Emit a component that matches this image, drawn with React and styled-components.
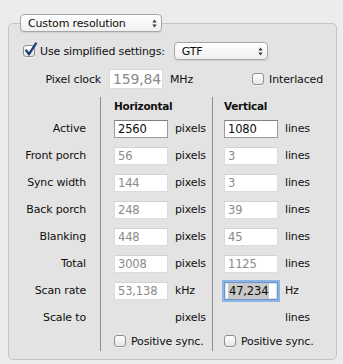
import React from 'react'
import styled, { createGlobalStyle } from 'styled-components'

const Global = createGlobalStyle`
  html, body {
    margin: 0;
    padding: 0;
    background: #ececec;
  }
  body {
    font-family: "DejaVu Sans", Verdana, sans-serif;
    font-size: 11px;
    letter-spacing: -0.15px;
    color: #0f0f0f;
  }
`

const Window = styled.div`
  position: relative;
  width: 343px;
  height: 364px;
  box-sizing: border-box;
  padding-top: 14px;
  overflow: hidden;
  background: #ececec;
`

const Box = styled.fieldset`
  margin: 0 6px 0 8px;
  padding: 0 0 8px;
  min-width: 0;
  border: 1px solid #c4c4c4;
  border-radius: 5px;
  background: #e3e3e3;
`

const Legend = styled.legend`
  margin-left: 11px;
  padding: 0;
`

const Popup = styled.div`
  display: flex;
  align-items: center;
  justify-content: space-between;
  width: ${p => p.$w}px;
  height: 18px;
  box-sizing: border-box;
  padding: 0 4px 0 7px;
  border: 1px solid #a6a6a6;
  border-radius: 4px;
  background: linear-gradient(#ffffff, #f0f0f0);
  box-shadow: 0 1px 1px rgba(0, 0, 0, 0.08);
  font-size: 11px;
  color: #0c0c0c;
`

const Arrows = () => (
  <svg width="5" height="9" viewBox="0 0 5 9">
    <path d="M0.3 3.6 L2.5 0.6 L4.7 3.6 Z M0.3 5.4 L2.5 8.4 L4.7 5.4 Z" fill="#3a3a3a" />
  </svg>
)

const Row = styled.div`
  display: flex;
  align-items: center;
  height: ${p => p.$h}px;
  margin-top: ${p => p.$mt || 0}px;
  padding-left: ${p => p.$pl || 0}px;
`

const CheckBox = styled.span`
  position: relative;
  flex: none;
  width: 12px;
  height: 12px;
  box-sizing: border-box;
  margin-right: ${p => p.$gap || 5}px;
  border: 1px solid #8f8f8f;
  border-radius: 3px;
  background: linear-gradient(#ffffff, #e6e6e6);
  box-shadow: 0 1px 0 rgba(255, 255, 255, 0.6);
`

const Tick = styled.svg`
  position: absolute;
  left: 0;
  top: -4px;
`

const Check = ({ checked, gap, children }) => (
  <>
    <CheckBox $gap={gap}>
      {checked && (
        <Tick width="14" height="15" viewBox="0 0 14 15">
          <path d="M2.2 8.4 L5 12.2 L12 1.4" fill="none" stroke="#1d3c78" strokeWidth="2.3" strokeLinecap="round" strokeLinejoin="round" />
        </Tick>
      )}
    </CheckBox>
    <span>{children}</span>
  </>
)

const ClockLabel = styled.span`
  width: 92px;
  text-align: right;
  margin-right: 8px;
`

const Field = styled.div`
  display: flex;
  align-items: center;
  flex: none;
  width: ${p => p.$w || 54}px;
  height: ${p => p.$h || 18}px;
  box-sizing: border-box;
  padding: 0 3px;
  background: #fff;
  border: 1px solid ${p => (p.$on ? '#9a9a9a' : '#dcdcdc')};
  border-top-color: ${p => (p.$on ? '#7f7f7f' : '#d2d2d2')};
  color: ${p => (p.$on ? '#0c0c0c' : '#8a8a8a')};
  font-size: ${p => p.$fs || 11.5}px;
  ${p => p.$focus && `
    border-color: #6a95cf;
    box-shadow: 0 0 0 2px #8db5e4, inset 0 0 0 1px rgba(120,160,215,0.3);
  `}
`

const Blank = styled.div`
  flex: none;
  width: 54px;
`

const Selected = styled.span`
  background: #c8c8c8;
  padding: 1px 1px;
`

const Unit = styled.span`
  margin-left: 7px;
`

const Interlaced = styled.div`
  display: flex;
  align-items: center;
  margin-left: 59px;
`

const Table = styled.div`
  display: grid;
  grid-template-columns: 91px 112px 1fr;
  margin-top: 8px;
`

const Column = styled.div`
  display: flex;
  flex-direction: column;
  padding-left: ${p => p.$pl || 0}px;
  ${p => p.$divider && 'border-left: 1px solid #8c8c8c;'}
`

const Cell = styled.div`
  display: flex;
  align-items: center;
  justify-content: ${p => (p.$right ? 'flex-end' : 'flex-start')};
  height: ${p => p.$h || 27}px;
  padding-right: ${p => (p.$right ? 14 : 0)}px;
`

const Head = styled.div`
  height: 18px;
  display: flex;
  align-items: center;
  font-weight: bold;
  font-size: 10.5px;
  letter-spacing: -0.3px;
  color: #111;
`

const labels = ['Active', 'Front porch', 'Sync width', 'Back porch', 'Blanking', 'Total', 'Scan rate', 'Scale to']

const horizontal = [
  { v: '2560', on: true, u: 'pixels' },
  { v: '56', u: 'pixels' },
  { v: '144', u: 'pixels' },
  { v: '248', u: 'pixels' },
  { v: '448', u: 'pixels' },
  { v: '3008', u: 'pixels' },
  { v: '53,138', u: 'kHz' },
  { blank: true, u: 'pixels' },
]

const vertical = [
  { v: '1080', on: true, u: 'lines' },
  { v: '3', u: 'lines' },
  { v: '3', u: 'lines' },
  { v: '39', u: 'lines' },
  { v: '45', u: 'lines' },
  { v: '1125', u: 'lines' },
  { v: '47,234', on: true, focus: true, u: 'Hz' },
  { blank: true, u: 'lines' },
]

const ValueColumn = ({ title, rows, pl }) => (
  <Column $divider $pl={pl}>
    <Head>{title}</Head>
    {rows.map((r, i) => (
      <Cell key={i}>
        {r.blank ? (
          <Blank />
        ) : (
          <Field $on={r.on} $focus={r.focus}>
            {r.focus ? <Selected>{r.v}</Selected> : r.v}
          </Field>
        )}
        <Unit>{r.u}</Unit>
      </Cell>
    ))}
    <Cell $h={20}>
      <Check gap={5}>Positive sync.</Check>
    </Cell>
  </Column>
)

export default function App() {
  return (
    <Window>
      <Global />
      <Box>
        <Legend>
          <Popup $w={142}>
            <span>Custom resolution</span>
            <Arrows />
          </Popup>
        </Legend>

        <Row $h={18} $mt={10} $pl={14}>
          <Check checked gap={5}>Use simplified settings:</Check>
          <div style={{ width: 9 }} />
          <Popup $w={94}>
            <span>GTF</span>
            <Arrows />
          </Popup>
        </Row>

        <Row $h={20} $mt={9}>
          <ClockLabel>Pixel clock</ClockLabel>
          <Field $h={20} $fs={14} $w={54}>159,84</Field>
          <Unit>MHz</Unit>
          <Interlaced>
            <Check gap={5}>Interlaced</Check>
          </Interlaced>
        </Row>

        <Table>
          <Column>
            <Head />
            {labels.map(l => (
              <Cell key={l} $right>{l}</Cell>
            ))}
            <Cell $h={20} />
          </Column>
          <ValueColumn title="Horizontal" rows={horizontal} pl={13} />
          <ValueColumn title="Vertical" rows={vertical} pl={11} />
        </Table>
      </Box>
    </Window>
  )
}
